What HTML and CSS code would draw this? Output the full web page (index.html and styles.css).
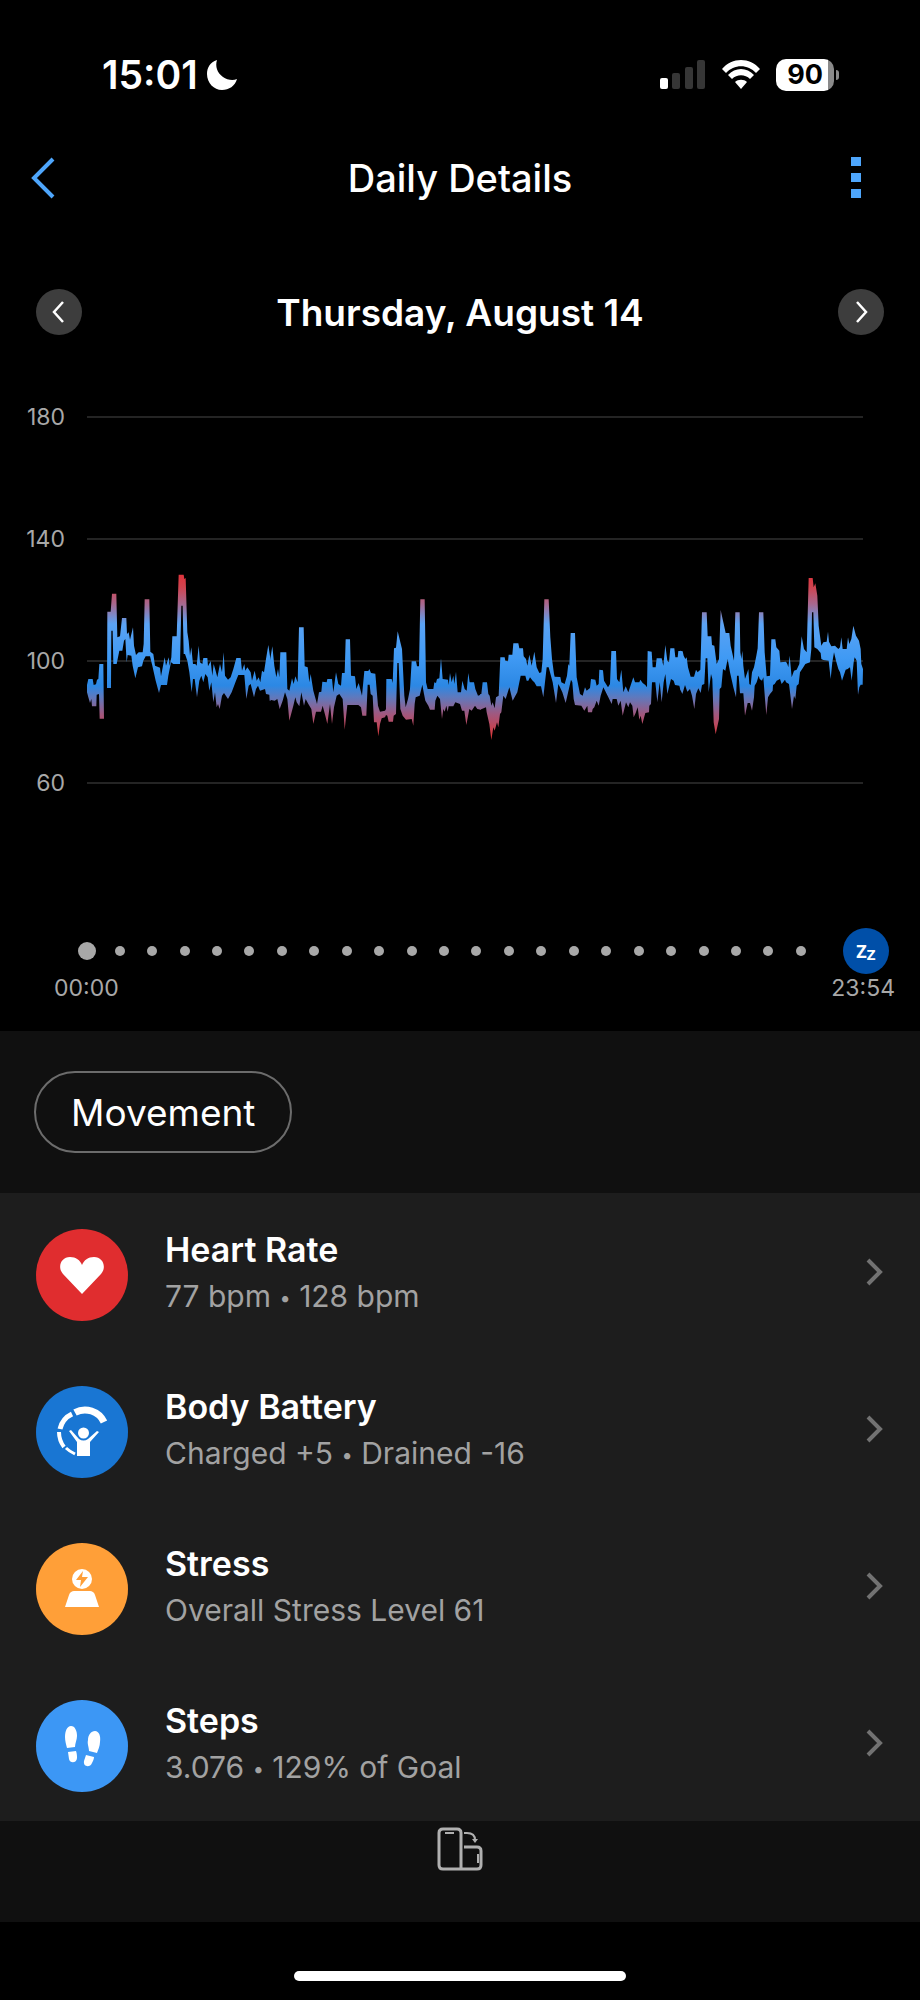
FILE: index.html
```html
<!DOCTYPE html>
<html lang="en">
<head>
  <meta charset="UTF-8" />
  <meta name="viewport" content="width=device-width, initial-scale=1.0"/>
  <title>Daily Details</title>
  <link rel="stylesheet" href="styles.css">
</head>
<body>
  <div class="status-bar">
    <div class="status-left">
      <span class="clock">15:01</span>
      <svg width="32" height="32" viewBox="0 0 32 32"><path d="M11 1C4 3 1 9 1 15c0 9 7 16 15 16 7 0 13-4 15-11-4 2-10 1-14-2-6-4-8-11-6-17z" fill="#fff"/></svg>
    </div>
    <div class="status-right">
      <svg width="46" height="30" viewBox="0 0 46 30">
        <rect x="0" y="18" width="8" height="11" rx="2" fill="#fff"/>
        <rect x="12" y="13" width="8" height="16" rx="2" fill="#363636"/>
        <rect x="25" y="7" width="8" height="22" rx="2" fill="#363636"/>
        <rect x="37" y="0" width="8" height="29" rx="2" fill="#363636"/>
      </svg>
      <svg width="38" height="30" viewBox="0 0 38 30" fill="#fff">
        <path d="M0 9C10-3 28-3 38 9l-4 4C26 4 12 4 4 13z"/>
        <path d="M6 15c7-8 19-8 26 0l-4 4c-5-5-13-5-18 0z"/>
        <path d="M13 22c3-3 9-3 12 0l-6 7z"/>
      </svg>
      <div class="battery"><span class="battery-level">90</span><span class="battery-tip"></span></div>
    </div>
  </div>

  <header class="header">
    <button class="icon-button" aria-label="Back">
      <svg width="26" height="42" viewBox="0 0 26 42"><path d="M23 2L4 21l19 19" fill="none" stroke="#4ea6fc" stroke-width="4"/></svg>
    </button>
    <h1>Daily Details</h1>
    <button class="icon-button" aria-label="More">
      <svg width="10" height="42" viewBox="0 0 10 42" fill="#4ea6fc"><rect width="10" height="9"/><rect y="16" width="10" height="9"/><rect y="32" width="10" height="9"/></svg>
    </button>
  </header>

  <div class="date-row">
    <button class="round-button" aria-label="Previous day">
      <svg width="14" height="22" viewBox="0 0 14 22"><path d="M11 1L2 11l9 10" fill="none" stroke="#fff" stroke-width="2.5"/></svg>
    </button>
    <h2>Thursday, August 14</h2>
    <button class="round-button" aria-label="Next day">
      <svg width="14" height="22" viewBox="0 0 14 22"><path d="M3 1l9 10-9 10" fill="none" stroke="#fff" stroke-width="2.5"/></svg>
    </button>
  </div>

  <div class="chart">
    <span class="y-label row-1">180</span><span class="grid-line row-1"></span>
    <span class="y-label row-2">140</span><span class="grid-line row-2"></span>
    <span class="y-label row-3">100</span><span class="grid-line row-3"></span>
    <span class="y-label row-4">60</span><span class="grid-line row-4"></span>
    <svg class="plot" viewBox="0 -579 2328 1464" preserveAspectRatio="none" role="img" aria-label="Heart rate">
      <defs>
        <linearGradient id="zones" gradientUnits="userSpaceOnUse" x1="0" y1="75" x2="0" y2="575">
          <stop offset="0" stop-color="#e0333b"/>
          <stop offset="0.08" stop-color="#cf4450"/>
          <stop offset="0.18" stop-color="#a8688f"/>
          <stop offset="0.3" stop-color="#5ba3f4"/>
          <stop offset="0.5" stop-color="#409af4"/>
          <stop offset="0.67" stop-color="#2c88e4"/>
          <stop offset="0.74" stop-color="#5f79bd"/>
          <stop offset="0.84" stop-color="#a0587f"/>
          <stop offset="1" stop-color="#e4322d"/>
        </linearGradient>
      </defs>
      <g fill="url(#zones)">
        <!-- 00:00 - 06:00 -->
        <g transform="translate(-81 0)">
          <path d="M81 408L85 390 98 390 101 408 108 406 111 392 115 390 118 345 130 345 132 509 119 509 117 435 110 437 109 472 96 472 94 450 90 462 85 445 81 430z"/>
          <path d="M141 417L142 188 152 188 156 134 169 134 172 265 180 262 186 207 199 207 201 255 206 250 210 272 219 235 222 290 228 318 236 310 248 310 251 285 254 151 268 151 271 308 280 315 285 350 300 356 303 382 314 325 318 350 326 325 329 350 334 325 337 262 350 262 356 77 371 77 373 90 377 87 382 250 386 275 390 320 394 295 399 345 406 345 410 350 416 290 420 340 427 345 430 327 442 327 444 352 452 336 457 380 461 345 466 362 472 385 480 345 486 370 491 310 495 380 504 392 512 385 520 360 529 327 542 327 546 365 553 345 556 365 562 355 572 370 576 395 584 365 590 395 596 385 601 400 606 365 612 370 618 330 625 288 632 335 632 455 629 455 628 437 618 435 615 420 600 425 594 410 588 420 582 445 572 405 566 410 559 450 553 378 535 378 528 395 515 430 504 450 492 432 486 440 479 480 474 465 470 475 465 430 460 460 454 400 448 425 443 385 436 375 430 400 424 380 418 395 411 445 404 390 399 390 395 430 388 370 382 335 375 315 371 315 368 170 364 170 360 345 340 345 333 340 325 380 321 408 303 408 297 432 287 395 277 350 270 322 257 322 250 335 246 352 234 355 226 388 218 350 214 320 203 318 200 340 196 270 192 275 187 305 178 305 170 345 160 345 158 245 154 245 153 417z"/>
        </g>
        <!-- 06:00 - 12:00 -->
        <g transform="translate(549 0)">
          <path d="M0 335L7 292 13 350 19 385 24 360 28 385 31 310 49 310 52 420 58 425 66 388 71 405 76 382 83 400 87 235 101 235 104 352 113 355 118 400 122 375 130 425 141 465 147 430 154 428 157 398 170 400 172 390 186 390 190 430 198 370 205 405 213 410 216 372 224 372 227 271 240 271 243 380 255 382 259 420 266 402 276 440 283 366 295 366 298 360 303 372 316 374 324 470 330 488 345 485 348 480 349 390 365 390 368 402 372 298 378 296 383 247 396 300 403 440 407 475 414 450 420 420 425 337 438 337 441 352 447 352 451 151 464 151 468 400 473 420 490 420 493 400 498 402 501 390 508 388 513 328 518 390 534 392 536 408 540 372 545 400 550 380 553 405 558 368 563 430 573 430 577 395 584 420 590 425 595 372 599 400 612 400 616 420 624 440 632 437 632 482 622 480 615 470 605 485 598 480 589 528 583 485 576 485 570 465 556 460 550 472 536 472 533 488 529 470 524 488 520 480 516 510 510 450 502 440 496 455 494 482 480 482 475 470 466 455 462 435 457 407 449 440 437 445 434 465 430 530 425 510 408 512 398 500 391 480 386 342 382 342 378 495 371 500 369 518 356 518 352 500 348 498 345 505 335 508 330 525 325 562 320 520 312 520 308 440 302 435 299 407 293 407 289 500 277 500 273 475 265 468 232 468 224 542 218 450 208 435 200 440 192 475 186 525 180 465 172 525 166 500 158 470 153 488 138 488 130 525 124 480 115 465 107 450 102 470 94 430 88 472 80 460 76 445 70 470 58 515 52 450 45 430 38 455 29 480 22 450 14 455 0 452z"/>
        </g>
        <!-- 12:00 - 18:00 -->
        <g transform="translate(1179 0)">
          <path d="M0 436L4 435 8 400 21 400 25 435 29 440 34 470 38 460 44 478 48 445 56 440 61 325 74 325 76 335 84 337 86 317 97 317 100 283 115 283 118 298 129 298 131 322 138 330 142 350 148 317 155 350 163 308 170 355 178 372 184 370 188 330 193 151 206 151 211 265 216 330 222 375 224 383 241 384 244 400 254 405 261 380 265 345 268 350 272 252 285 252 290 385 300 435 308 440 315 415 320 425 330 417 333 390 346 392 350 410 356 405 358 362 369 364 372 395 384 415 390 405 394 306 408 306 411 390 418 400 424 362 430 430 437 412 445 430 455 400 460 385 465 400 478 400 481 392 488 402 496 408 501 415 503 306 515 308 518 355 527 355 530 328 545 328 550 350 556 288 562 335 567 340 571 298 583 298 586 325 593 325 595 306 602 306 602 425 598 410 585 408 581 395 573 390 568 410 562 435 556 375 551 400 545 460 539 400 532 460 526 400 516 400 513 465 508 470 507 490 496 492 487 525 482 500 478 512 473 475 467 492 461 505 457 470 450 460 445 475 438 460 428 500 422 455 415 470 410 450 398 450 395 465 385 445 370 415 362 440 356 470 350 455 343 475 338 480 336 490 324 490 322 470 313 485 304 470 285 468 281 450 277 400 273 392 257 462 247 430 240 415 235 405 228 462 218 400 206 355 200 355 190 445 183 412 170 412 163 400 158 395 150 385 145 395 140 395 136 380 122 380 112 430 98 455 88 415 77 450 70 440 64 490 60 495 55 535 51 520 44 545 40 535 34 573 28 525 20 490 18 475 0 482z"/>
        </g>
        <!-- 18:00 - 23:54 -->
        <g transform="translate(1779 0)">
          <path d="M0 305L8 307 11 320 16 330 20 325 24 355 32 383 42 383 48 362 53 370 61 362 66 190 80 190 83 262 94 262 96 288 103 290 110 345 117 330 122 183 130 220 137 252 148 252 152 290 162 335 166 190 179 190 181 310 184 330 187 305 190 350 195 390 202 370 205 360 208 405 212 408 216 370 222 355 229 320 233 298 237 190 250 190 254 310 260 382 270 380 274 271 286 271 289 295 298 305 301 340 318 338 322 345 325 355 329 320 335 385 342 365 350 362 358 345 361 310 365 262 372 300 380 310 386 87 398 87 401 115 406 103 412 140 416 230 424 290 430 280 440 278 444 248 447 278 454 292 465 290 475 300 480 295 484 265 488 300 500 300 504 265 508 285 514 270 520 230 528 260 537 275 542 300 544 345 549 360 548 407 542 407 538 415 534 438 530 335 524 325 521 340 515 395 510 355 503 360 497 362 491 380 486 395 480 370 475 360 468 335 462 310 457 340 452 390 446 335 430 333 424 330 422 312 412 300 403 295 400 190 396 190 394 300 390 340 376 345 368 358 360 370 356 405 350 410 346 450 342 440 336 480 330 430 327 405 318 400 315 392 305 405 300 390 290 395 284 405 279 408 278 425 270 435 264 445 259 498 255 450 250 385 246 395 239 390 236 380 230 400 224 410 222 445 216 485 210 462 203 462 195 500 190 433 180 433 176 380 171 380 168 445 160 415 150 370 143 330 136 365 129 360 124 415 119 420 117 510 107 556 101 520 97 390 93 375 86 430 82 328 77 328 73 405 66 408 62 432 55 418 48 435 43 480 36 440 30 420 22 428 15 408 7 435 0 420z"/>
        </g>
      </g>
    </svg>
  </div>

  <div class="timeline">
    <span class="dot dot-start"></span><span class="dot"></span><span class="dot"></span><span class="dot"></span>
    <span class="dot"></span><span class="dot"></span><span class="dot"></span><span class="dot"></span>
    <span class="dot"></span><span class="dot"></span><span class="dot"></span><span class="dot"></span>
    <span class="dot"></span><span class="dot"></span><span class="dot"></span><span class="dot"></span>
    <span class="dot"></span><span class="dot"></span><span class="dot"></span><span class="dot"></span>
    <span class="dot"></span><span class="dot"></span><span class="dot"></span>
    <span class="sleep"><span>Z</span><span class="small-z">Z</span></span>
  </div>
  <div class="times"><span>00:00</span><span>23:54</span></div>

  <div class="filters">
    <button class="chip">Movement</button>
  </div>

  <nav class="list">
    <a class="item" href="#heart-rate">
      <span class="badge red">
        <svg width="92" height="92" viewBox="0 0 92 92"><path d="M46 65L27 45c-6-7-2-17 7-17 6 0 10 3 12 8 2-5 6-8 12-8 9 0 13 10 7 17z" fill="#fff"/></svg>
      </span>
      <span class="text"><span class="title">Heart Rate</span><span class="detail">77 bpm <span class="bullet">•</span> 128 bpm</span></span>
      <svg class="chevron" width="18" height="30" viewBox="0 0 18 30"><path d="M3 3l12 12L3 27" fill="none" stroke="#727272" stroke-width="4"/></svg>
    </a>
    <a class="item" href="#body-battery">
      <span class="badge blue">
        <svg width="92" height="92" viewBox="0 0 92 92">
          <g fill="none" stroke="#fff">
            <path d="M39 26.500a21 21 0 0 1 29 9.500" stroke-width="7"/>
            <path d="M24 43a22 22 0 0 1 12-15" stroke-width="5"/>
            <path d="M23 46c0 6 2 11 5 15" stroke-width="4"/>
            <path d="M30 62c3 3 5 4 9 6" stroke-width="3"/>
          </g>
          <circle cx="47.500" cy="47" r="5.500" fill="#fff"/>
          <path d="M33 45l8 11v14h13V56l9-10-2-1-9 8c-3 2-6 2-9 0l-8-9z" fill="#fff"/>
        </svg>
      </span>
      <span class="text"><span class="title">Body Battery</span><span class="detail">Charged +5 <span class="bullet">•</span> Drained -16</span></span>
      <svg class="chevron" width="18" height="30" viewBox="0 0 18 30"><path d="M3 3l12 12L3 27" fill="none" stroke="#727272" stroke-width="4"/></svg>
    </a>
    <a class="item" href="#stress">
      <span class="badge orange">
        <svg width="92" height="92" viewBox="0 0 92 92">
          <circle cx="46" cy="36" r="10" fill="#fff"/>
          <path d="M47 28l-7 9h5l-1 7 8-10h-6z" fill="#ff9f38"/>
          <path d="M29 64l4-12c1-3 3-4 5-4h16c2 0 4 1 5 4l4 12z" fill="#fff"/>
        </svg>
      </span>
      <span class="text"><span class="title">Stress</span><span class="detail">Overall Stress Level 61</span></span>
      <svg class="chevron" width="18" height="30" viewBox="0 0 18 30"><path d="M3 3l12 12L3 27" fill="none" stroke="#727272" stroke-width="4"/></svg>
    </a>
    <a class="item" href="#steps">
      <span class="badge sky">
        <svg width="92" height="92" viewBox="0 0 92 92" fill="#fff">
          <path d="M35 26c4 0 6 5 6 10 0 4-2 7-2 11l-8 1c-1-4-2-7-2-11 0-6 2-11 6-11zM32 52l8-1c1 3 1 5 1 7 0 5-7 6-8 1z"/>
          <path d="M59 31c4 0 6 5 5 11 0 4-2 8-3 11l-8-2c0-4-2-7-1-11 0-5 3-9 7-9zM50 55l8 2c0 2-1 4-2 6-2 5-9 4-8-2z"/>
        </svg>
      </span>
      <span class="text"><span class="title">Steps</span><span class="detail">3.076 <span class="bullet">•</span> 129% of Goal</span></span>
      <svg class="chevron" width="18" height="30" viewBox="0 0 18 30"><path d="M3 3l12 12L3 27" fill="none" stroke="#727272" stroke-width="4"/></svg>
    </a>
  </nav>

  <div class="rotate-bar">
    <button class="icon-button" aria-label="Rotate">
      <svg width="46" height="44" viewBox="0 0 46 44" fill="none" stroke="#b0b0b0" stroke-width="3">
        <path d="M27 20h13q4 0 4 4v14q0 4-4 4H6q-4 0-4-4V6q0-4 4-4h14q4 0 4 4v36"/>
        <path d="M8 6h9M41 27v9M27 6h3q8 0 8 7" stroke-width="2"/>
        <path d="M35 12h6l-3 4z" fill="#b0b0b0" stroke="none"/>
      </svg>
    </button>
  </div>

  <div class="home-area"><span class="home-indicator"></span></div>
</body>
</html>
```

FILE: styles.css
```css
* {
  box-sizing: border-box;
}
body {
  margin: 0;
  background-color: #000;
  color: #fff;
  font-family: Inter, "Liberation Sans", sans-serif;
}
svg {
  display: block;
}
button {
  font-family: inherit;
  color: inherit;
  border: none;
  background: none;
  padding: 0;
  cursor: pointer;
}
h1, h2 {
  margin: 0;
  font-size: 37px;
  font-weight: 600;
}
h1 {
  font-size: 38px;
  font-weight: 500;
}

/* status bar */
.status-bar {
  display: flex;
  align-items: center;
  justify-content: space-between;
  height: 118px;
  padding: 32px 81px 0 102px;
}
.status-left {
  display: flex;
  align-items: center;
  gap: 8px;
}
.clock {
  font-size: 39px;
  font-weight: 600;
  line-height: 44px;
}
.status-right {
  display: flex;
  align-items: center;
  gap: 16px;
}
.battery {
  display: flex;
  align-items: center;
  gap: 2px;
}
.battery-level {
  width: 58px;
  height: 32px;
  border-radius: 10px;
  background: linear-gradient(90deg, #fff 90%, #8a8a8a 90%);
  color: #000;
  font-size: 27px;
  font-weight: 700;
  line-height: 32px;
  text-align: center;
}
.battery-tip {
  width: 3px;
  height: 10px;
  border-radius: 0 3px 3px 0;
  background-color: #8a8a8a;
}

/* header and date */
.header {
  display: grid;
  grid-template-columns: 1fr auto 1fr;
  align-items: center;
  height: 120px;
  padding: 0 30px;
}
.header .icon-button:first-child {
  justify-self: start;
}
.header .icon-button:last-child {
  justify-self: end;
  margin-right: 29px;
}
.date-row {
  display: flex;
  align-items: center;
  justify-content: space-between;
  height: 148px;
  padding: 0 36px;
}
.round-button {
  display: flex;
  align-items: center;
  justify-content: center;
  width: 46px;
  height: 46px;
  border-radius: 50%;
  background-color: #3d3d3d;
}

/* chart */
.chart {
  display: grid;
  grid-template-columns: 65px 1fr;
  grid-template-rows: repeat(4, 122px);
  column-gap: 22px;
  align-items: center;
  margin-top: -30px;
  padding-right: 57px;
}
.y-label {
  grid-column: 1;
  color: #a8a8a8;
  font-size: 23px;
  text-align: right;
}
.grid-line {
  grid-column: 2;
  height: 2px;
  background-color: #242424;
}
.row-1 { grid-row: 1; }
.row-2 { grid-row: 2; }
.row-3 { grid-row: 3; }
.row-4 { grid-row: 4; }
.plot {
  grid-column: 2;
  grid-row: 1 / -1;
  width: 100%;
  height: 100%;
}

/* timeline */
.timeline {
  display: grid;
  grid-template-columns: repeat(25, minmax(0, 1fr));
  align-items: center;
  justify-items: center;
  height: 46px;
  margin-top: 84px;
  padding: 0 38px 0 71px;
}
.dot {
  width: 10px;
  height: 10px;
  border-radius: 50%;
  background-color: #a8a8a8;
}
.dot-start {
  width: 18px;
  height: 18px;
}
.sleep {
  grid-column: 25;
  display: flex;
  align-items: center;
  justify-content: center;
  width: 46px;
  height: 46px;
  border-radius: 50%;
  background-color: #004fa8;
  font-family: "Open Sans", sans-serif;
  font-size: 18px;
  font-weight: 700;
  line-height: 20px;
}
.small-z {
  padding-top: 6px;
  font-size: 15px;
}
.times {
  display: flex;
  justify-content: space-between;
  height: 57px;
  padding: 0 25px 0 54px;
  color: #a8a8a8;
  font-size: 23px;
  line-height: 28px;
}

/* filter */
.filters {
  padding: 40px 34px;
  background-color: #101010;
}
.chip {
  display: block;
  height: 82px;
  padding: 0 35px;
  border: 2px solid #6c6c6c;
  border-radius: 41px;
  font-size: 37px;
}

/* list */
.list {
  background-color: #1d1d1d;
}
.item {
  display: flex;
  align-items: center;
  height: 157px;
  padding: 0 37px 0 36px;
  color: #fff;
  text-decoration: none;
}
.badge {
  flex: none;
  margin-top: 7px;
  border-radius: 50%;
}
.red { background-color: #e02d2f; }
.blue { background-color: #1976d3; }
.orange { background-color: #ff9f38; }
.sky { background-color: #3c97f5; }
.text {
  flex: 1;
  display: flex;
  flex-direction: column;
  margin: 2px 0 0 37px;
}
.title {
  font-size: 34px;
  font-weight: 600;
  line-height: 46px;
}
.detail {
  color: #a2a2a2;
  font-size: 30px;
  line-height: 46px;
}
.bullet {
  font-size: 20px;
  vertical-align: 2px;
  line-height: 1;
}

/* bottom */
.rotate-bar {
  display: flex;
  justify-content: center;
  align-items: flex-start;
  height: 101px;
  padding-top: 6px;
  background-color: #101010;
}
.home-area {
  display: flex;
  justify-content: center;
  align-items: flex-end;
  height: 78px;
  padding-bottom: 19px;
}
.home-indicator {
  width: 36%;
  height: 10px;
  border-radius: 5px;
  background-color: #fff;
}
```
